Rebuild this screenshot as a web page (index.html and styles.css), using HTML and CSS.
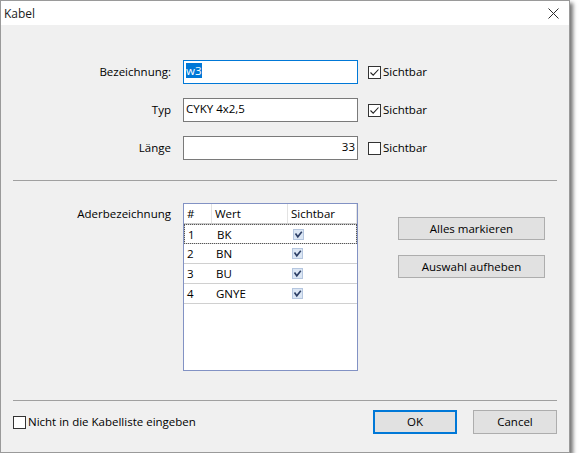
FILE: index.html
```html
<!DOCTYPE html>
<html lang="de">
<head>
<meta charset="utf-8">
<title>Kabel</title>
<link rel="stylesheet" href="styles.css">
</head>
<body>
<div class="window">
  <div class="titlebar">
    <span class="title">Kabel</span>
    <svg class="close" width="11" height="11" viewBox="0 0 11 11"><path d="M0.5 0.5 L10.5 10.5 M10.5 0.5 L0.5 10.5" stroke="#2b2b2b" stroke-width="1" fill="none"/></svg>
  </div>
  <div class="content">
    <div class="fields">
      <div class="lbl">Bezeichnung:</div>
      <div class="textbox focused"><span class="sel">w3</span></div>
      <div class="check"><span class="box"><svg width="11" height="11" viewBox="0 0 11 11"><path d="M1.5 5.5 L4.2 8.2 L9.5 2.5" stroke="#222" stroke-width="1.1" fill="none"/></svg></span>Sichtbar</div>

      <div class="lbl">Typ</div>
      <div class="textbox">CYKY 4x2,5</div>
      <div class="check"><span class="box"><svg width="11" height="11" viewBox="0 0 11 11"><path d="M1.5 5.5 L4.2 8.2 L9.5 2.5" stroke="#222" stroke-width="1.1" fill="none"/></svg></span>Sichtbar</div>

      <div class="lbl">Länge</div>
      <div class="textbox right">33</div>
      <div class="check"><span class="box"></span>Sichtbar</div>
    </div>

    <div class="sep sep-top"></div>

    <div class="cores">
      <div class="lbl lbl-top">Aderbezeichnung</div>
      <div class="list">
        <div class="row head"><div class="c">#</div><div class="c">Wert</div><div class="c">Sichtbar</div></div>
        <div class="row focus"><div class="c">1</div><div class="c v">BK</div><div class="c"><span class="mini"><svg width="9" height="9" viewBox="0 0 9 9"><path d="M1.5 3.5 L3.8 6.8 L7.8 1.8" stroke="#2d3f66" stroke-width="1.6" fill="none"/></svg></span></div></div>
        <div class="row"><div class="c">2</div><div class="c v">BN</div><div class="c"><span class="mini"><svg width="9" height="9" viewBox="0 0 9 9"><path d="M1.5 3.5 L3.8 6.8 L7.8 1.8" stroke="#2d3f66" stroke-width="1.6" fill="none"/></svg></span></div></div>
        <div class="row"><div class="c">3</div><div class="c v">BU</div><div class="c"><span class="mini"><svg width="9" height="9" viewBox="0 0 9 9"><path d="M1.5 3.5 L3.8 6.8 L7.8 1.8" stroke="#2d3f66" stroke-width="1.6" fill="none"/></svg></span></div></div>
        <div class="row"><div class="c">4</div><div class="c v">GNYE</div><div class="c"><span class="mini"><svg width="9" height="9" viewBox="0 0 9 9"><path d="M1.5 3.5 L3.8 6.8 L7.8 1.8" stroke="#2d3f66" stroke-width="1.6" fill="none"/></svg></span></div></div>
      </div>
      <div class="actions">
        <div class="btn">Alles markieren</div>
        <div class="btn">Auswahl aufheben</div>
      </div>
    </div>

    <div class="sep sep-bottom"></div>

    <div class="footer">
      <div class="check"><span class="box"></span>Nicht in die Kabelliste eingeben</div>
      <div class="buttons">
        <div class="btn small default">OK</div>
        <div class="btn small">Cancel</div>
      </div>
    </div>
  </div>
</div>
</body>
</html>
```

FILE: styles.css
```css
html, body {
  margin: 0;
  background: #ffffff;
}
body {
  font-family: "Open Sans", "Noto Sans", sans-serif;
  font-size: 11.5px;
  color: #000;
}
.window {
  width: 568px;
  height: 451px;
  border: 1px solid #9a9a9a;
  background: #f0f0f0;
  box-shadow: 3px 3px 4px rgba(0, 0, 0, 0.55);
  display: flex;
  flex-direction: column;
}
.titlebar {
  height: 24px;
  background: #fff;
  display: flex;
  align-items: center;
  justify-content: space-between;
  padding: 0 10px 0 3px;
}
.title {
  font-size: 12px;
  color: #1a1a1a;
}
.close {
  display: block;
}
.content {
  flex: 1;
  padding: 35px 12px 0 12px;
  display: flex;
  flex-direction: column;
}
.fields {
  display: grid;
  grid-template-columns: 160px 175px 1fr;
  column-gap: 10px;
  row-gap: 14px;
  align-items: center;
}
.lbl {
  text-align: right;
  padding-right: 2px;
  line-height: 16px;
}
.textbox {
  height: 24px;
  box-sizing: border-box;
  border: 1px solid #7a7a7a;
  background: #fff;
  padding: 2px 2px 0 2px;
  line-height: 16px;
}
.textbox.focused {
  border-color: #0078d7;
}
.textbox.right {
  text-align: right;
}
.sel {
  background: #0078d7;
  color: #fff;
  display: inline-block;
  line-height: 15px;
}
.check {
  display: flex;
  align-items: center;
  line-height: 16px;
}
.box {
  width: 13px;
  height: 13px;
  box-sizing: border-box;
  border: 1px solid #333;
  background: #fff;
  margin-right: 2px;
  display: flex;
  align-items: center;
  justify-content: center;
}
.box svg {
  display: block;
}
.sep {
  height: 1px;
  background: #a0a0a0;
}
.sep-top {
  margin-top: 20px;
}
.sep-bottom {
  margin-top: 29px;
}
.cores {
  margin-top: 22px;
  display: grid;
  grid-template-columns: 160px 175px 1fr;
  column-gap: 10px;
  align-items: start;
}
.lbl-top {
  padding-top: 3px;
}
.list {
  height: 168px;
  box-sizing: border-box;
  border: 1px solid #8292c4;
  background: #fff;
}
.row {
  display: grid;
  grid-template-columns: 28px 76px 69px;
  height: 20px;
  box-sizing: border-box;
  border-bottom: 1px solid #d0d0d0;
}
.row.head .c {
  border-right: 1px solid #e3e3e3;
  padding-left: 3px;
}
.row.head {
  border-bottom-color: #c8c8c8;
}
.c {
  padding-left: 3px;
  line-height: 19px;
  white-space: nowrap;
  box-sizing: border-box;
}
.c.v {
  padding-left: 4px;
}
.row.focus {
  outline: 1px dotted #555;
  outline-offset: -1px;
  border: 1px solid #cfcfcf;
}
.mini {
  display: inline-block;
  width: 9px;
  height: 9px;
  margin-left: 1px;
  background: #dbe6f4;
  border: 1px solid #b5c6df;
  vertical-align: middle;
  position: relative;
  top: -1px;
}
.mini svg {
  display: block;
}
.actions {
  margin-left: 30px;
  margin-top: 14px;
  display: flex;
  flex-direction: column;
  gap: 15px;
  width: 147px;
}
.btn {
  height: 23px;
  box-sizing: border-box;
  border: 1px solid #adadad;
  background: #e1e1e1;
  text-align: center;
  line-height: 21px;
}
.footer {
  margin-top: 9px;
  display: flex;
  align-items: center;
  justify-content: space-between;
}
.buttons {
  display: flex;
  gap: 16px;
}
.btn.small {
  width: 84px;
  height: 24px;
  line-height: 22px;
}
.btn.default {
  border-color: #0078d7;
  box-shadow: inset 0 0 0 1px #0078d7;
}
```
